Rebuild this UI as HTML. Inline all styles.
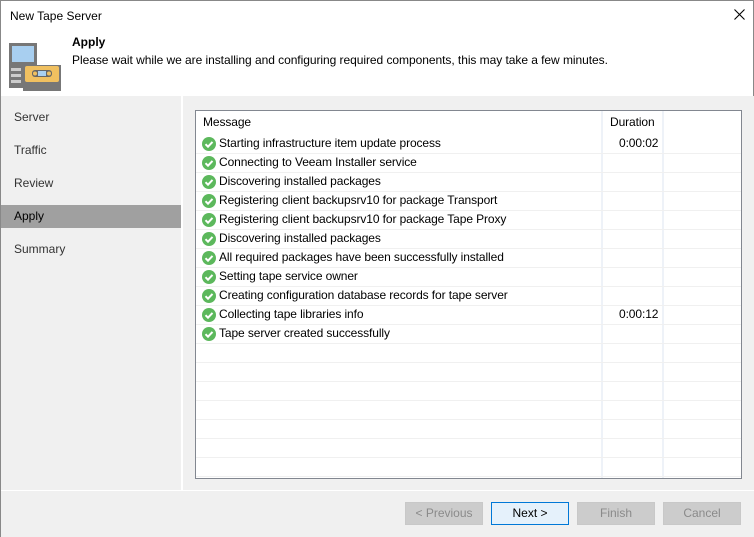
<!DOCTYPE html>
<html><head><style>
*{margin:0;padding:0;box-sizing:border-box}
body{width:754px;height:537px;overflow:hidden;font-family:"Segoe UI","Liberation Sans",sans-serif;font-size:12px;color:#000;background:#fff}
.win{position:absolute;left:0;top:0;width:754px;height:537px;border:1px solid #888;background:#fff}
.abs{position:absolute}
.nav{position:absolute;left:0;top:95px;width:180px;height:394px;background:#f0f0f0}
.nav div{position:absolute;left:0;width:180px;height:23px;line-height:23px;padding-left:13px;color:#333}
.content{position:absolute;left:182px;top:95px;width:571px;height:394px;background:#f0f0f0}
.table{position:absolute;left:194px;top:109px;width:547px;height:369px;border:1px solid #828790;background:#fff;overflow:hidden}
.row{position:absolute;left:0;width:545px;height:19px;border-bottom:1px solid #f0f0f0;letter-spacing:-0.1px}
.row span{position:absolute;top:1px;white-space:nowrap}
.vl{position:absolute;top:0;width:2px;height:369px;background:#eef2f8}
.chk{position:absolute;left:6px;top:2px;width:14px;height:14px;border-radius:50%;background:#5cb85c}
.footer{position:absolute;left:0;top:489px;width:753px;height:47px;background:#f0f0f0;border-top:1px solid #fff}
.btn{position:absolute;top:501px;width:78px;height:23px;border:1px solid #c8c8c8;background:#ccc;color:#8a8a8a;text-align:center;line-height:21px}
</style></head><body>
<div class="win">
<div class="abs" style="left:9px;top:8px">New Tape Server</div>
<svg class="abs" style="left:733px;top:8px" width="11" height="11"><path d="M0.5 0.5L10.5 10.5M10.5 0.5L0.5 10.5" stroke="#000" stroke-width="1.1"/></svg>
<svg class="abs" style="left:8px;top:42px" width="52" height="48">
<rect x="0" y="0" width="28" height="45" fill="#777"/>
<rect x="3" y="3" width="22" height="16" fill="#a8cff0"/>
<rect x="2" y="25" width="10" height="3" fill="#ccc"/><rect x="2" y="31" width="10" height="3" fill="#ccc"/><rect x="2" y="37" width="10" height="3" fill="#ccc"/>
<rect x="14" y="22" width="38" height="26" fill="#777"/>
<rect x="16" y="23" width="34" height="16" rx="2" fill="#f0c060"/>
<rect x="23" y="27" width="20" height="7" rx="3" fill="#666"/>
<rect x="29" y="28" width="8" height="5" fill="#a8cff0"/>
<circle cx="26" cy="30.5" r="2" fill="#f0c060"/><circle cx="40" cy="30.5" r="2" fill="#f0c060"/>
</svg>
<div class="abs" style="left:71px;top:34px;font-weight:bold">Apply</div>
<div class="abs" style="left:71px;top:52px;letter-spacing:-0.05px">Please wait while we are installing and configuring required components, this may take a few minutes.</div>
<div class="nav">
<div style="top:10px">Server</div>
<div style="top:43px">Traffic</div>
<div style="top:76px">Review</div>
<div style="top:109px;background:#a0a0a0;color:#000">Apply</div>
<div style="top:142px">Summary</div>
</div>
<div class="content"></div>
<div class="table">
<div class="vl" style="left:405px"></div>
<div class="vl" style="left:466px"></div>
<div class="row" style="top:0;height:24px;border:none"><span style="left:7px;top:4px">Message</span><span style="left:414px;top:4px">Duration</span></div>
<div id="rows"></div>
</div>
<div class="footer"></div>
<div class="btn" style="left:404px">&lt; Previous</div>
<div class="btn" style="left:490px;border-color:#0078d7;background:#e5f1fb;color:#000">Next &gt;</div>
<div class="btn" style="left:576px">Finish</div>
<div class="btn" style="left:662px">Cancel</div>
</div>
<script>
var m=["Starting infrastructure item update process","Connecting to Veeam Installer service","Discovering installed packages","Registering client backupsrv10 for package Transport","Registering client backupsrv10 for package Tape Proxy","Discovering installed packages","All required packages have been successfully installed","Setting tape service owner","Creating configuration database records for tape server","Collecting tape libraries info","Tape server created successfully"];
var d={0:"0:00:02",9:"0:00:12"};var h="";
for(var i=0;i<18;i++){var t=24+i*19;h+='<div class="row" style="top:'+t+'px">';
if(i<m.length){h+='<div class="chk"><svg width="14" height="14"><path d="M3.5 7.2l2.5 2.5 4.5-4.8" stroke="#fff" stroke-width="2" fill="none"/></svg></div><span style="left:23px">'+m[i]+'</span>';if(d[i])h+='<span style="left:423px">'+d[i]+'</span>';}
h+='</div>';}
document.getElementById("rows").outerHTML=h;
</script>
</body></html>
